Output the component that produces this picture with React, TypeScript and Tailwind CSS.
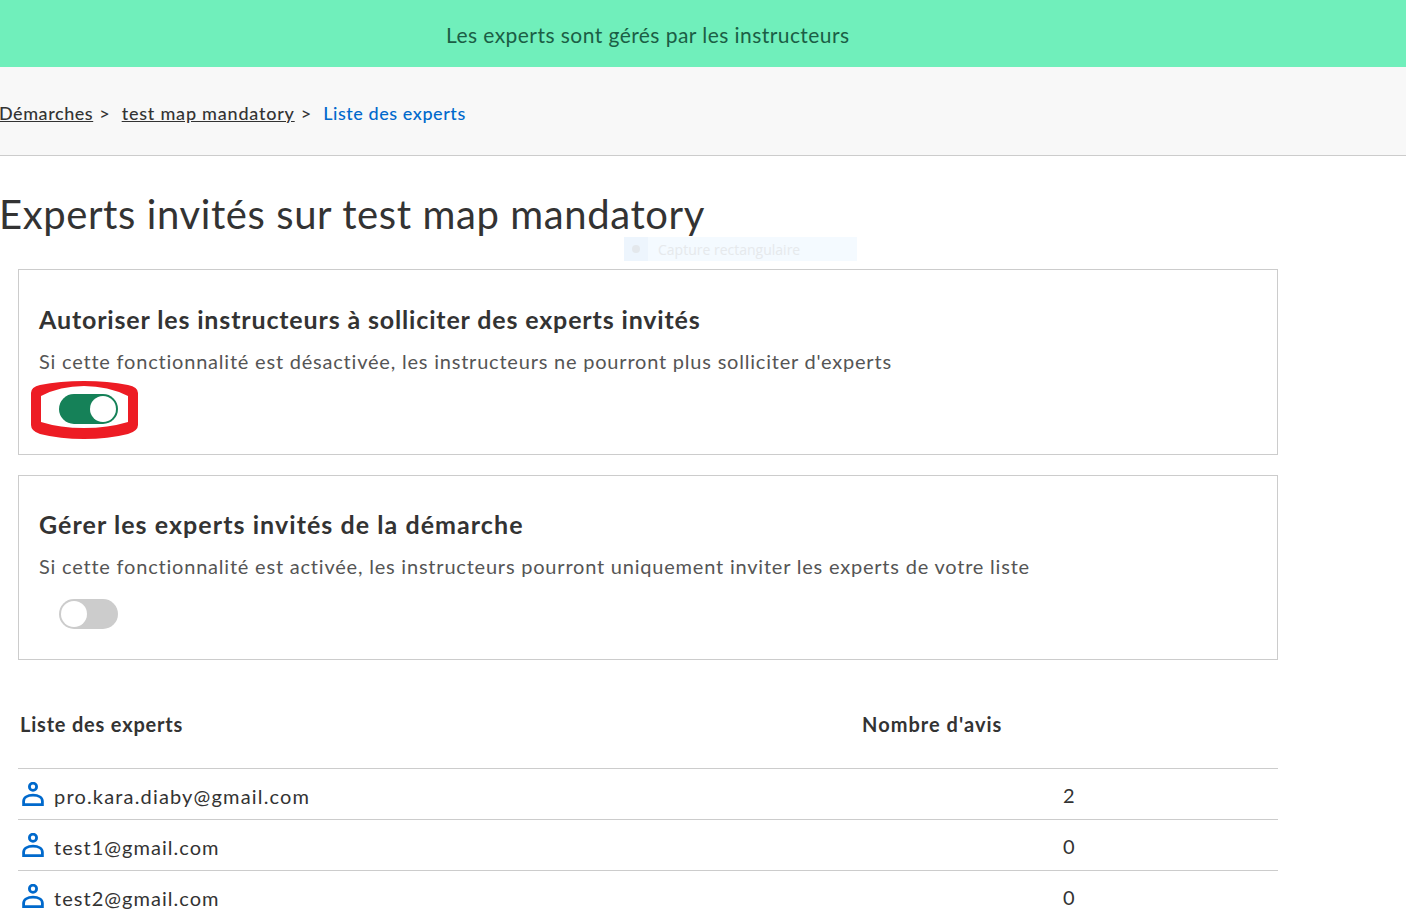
import React from "react";

const experts = [
  { email: "pro.kara.diaby@gmail.com", count: 2, spacing: "tracking-[1.17px]" },
  { email: "test1@gmail.com", count: 0, spacing: "tracking-[1.03px]" },
  { email: "test2@gmail.com", count: 0, spacing: "tracking-[1.03px]" },
];

const UserIcon = () => (
  <svg width="22" height="24" viewBox="0 0 22 24" fill="none" stroke="#0069cc" strokeWidth="2.8" className="shrink-0">
    <circle cx="11" cy="4.8" r="3.6" />
    <path d="M1.6 22.6v-3.4c0-3.6 3.8-6 9.4-6s9.4 2.4 9.4 6v3.4z" />
  </svg>
);

const Toggle = ({ on }: { on: boolean }) => (
  <div
    className={`flex h-[30px] w-[59px] rounded-full p-[2px] ${
      on ? "justify-end bg-[#158158]" : "justify-start bg-[#cccccc]"
    }`}
  >
    <div className="h-[26px] w-[26px] rounded-full bg-white" />
  </div>
);

const Card = ({
  title,
  hint,
  on,
  className,
  titleClassName,
  children,
}: {
  title: string;
  hint: string;
  on: boolean;
  className: string;
  titleClassName: string;
  children?: React.ReactNode;
}) => (
  <section className={`relative border border-[#cccccc] pl-5 ${className}`}>
    <h2 className={`text-[25px] leading-[54px] font-bold text-[#333333] ${titleClassName}`}>{title}</h2>
    <p className="text-[20px] leading-[30px] tracking-[0.79px] text-[#555555]">{hint}</p>
    <div className="ml-5 mt-[18px]">
      <Toggle on={on} />
    </div>
    {children}
  </section>
);

export default function App() {
  return (
    <div className="relative h-[918px] overflow-hidden bg-white font-['Lato',sans-serif] text-[#333333]">
      {/* bandeau */}
      <div className="flex h-[67px] items-center bg-[#70efbb] pl-[446px] pt-[2px] text-[21px] tracking-[0.44px] text-[#1b5e45]">
        Les experts sont gérés par les instructeurs
      </div>

      {/* breadcrumb */}
      <nav className="flex h-[89px] items-center border-b border-[#cccccc] bg-[#f8f8f8] pt-1 text-[18px] font-medium">
        <a className="-ml-[1px] tracking-[0.55px] underline">Démarches</a>
        <span className="ml-[6px]">&gt;</span>
        <a className="ml-[12px] tracking-[0.78px] underline">test map mandatory</a>
        <span className="ml-[6px]">&gt;</span>
        <a className="ml-[12px] tracking-[0.56px] text-[#0069cc]">Liste des experts</a>
      </nav>

      <h1 className="mt-[33px] -ml-[1px] text-[40px] leading-[50px] font-normal tracking-[0.6px] text-[#333333]">
        Experts invités sur test map mandatory
      </h1>

      <main className="ml-[18px] mt-[30px] w-[1260px]">
        <div className="flex flex-col gap-5">
          <Card
            title="Autoriser les instructeurs à solliciter des experts invités"
            hint="Si cette fonctionnalité est désactivée, les instructeurs ne pourront plus solliciter d'experts"
            on
            className="h-[186px] pt-[22px]"
            titleClassName="tracking-[0.85px]"
          >
            {/* annotation rouge */}
            <svg width="110" height="60" viewBox="0 0 110 60" className="absolute left-[11px] top-[110px]">
              <path
                fillRule="evenodd"
                fill="#ed1c24"
                d="M1 13Q1 7 10 5Q30 1 54 1Q78 1 98 5Q108 7 108 13V45Q108 51 98 54Q78 59 54 59Q30 59 10 54Q1 51 1 45ZM11 16V42Q30 48 54 48Q78 48 98 42V16Q78 6 54 6Q30 6 11 16Z"
              />
            </svg>
          </Card>
          <Card
            title="Gérer les experts invités de la démarche"
            hint="Si cette fonctionnalité est activée, les instructeurs pourront uniquement inviter les experts de votre liste"
            on={false}
            className="h-[185px] pt-[21px]"
            titleClassName="tracking-[1.06px]"
          />
        </div>

        <table className="mt-[25px] w-full border-collapse text-[20px]">
          <thead>
            <tr className="h-[83px] border-b border-[#cccccc] text-left">
              <th className="w-[844px] pb-[4px] pl-[2px] font-bold tracking-[0.8px]">Liste des experts</th>
              <th className="pb-[4px] font-bold tracking-[1.03px]">Nombre d'avis</th>
            </tr>
          </thead>
          <tbody>
            {experts.map((expert) => (
              <tr key={expert.email} className="h-[51px] border-b border-[#cccccc] last:border-b-0">
                <td className="pl-1">
                  <div className="flex items-center gap-[10px]">
                    <UserIcon />
                    <span className={`mt-1 ${expert.spacing}`}>{expert.email}</span>
                  </div>
                </td>
                <td className="pl-[201px] pt-[2px]">{expert.count}</td>
              </tr>
            ))}
          </tbody>
        </table>
      </main>

      {/* reste de l'outil de capture */}
      <div className="absolute left-[624px] top-[237px] flex h-6 w-[233px] items-center bg-[#f4faff] text-[#e6e9ec]">
        <span className="flex h-6 w-[24px] items-center justify-center bg-[#edf5fd]">
          <span className="h-2 w-2 rounded-full bg-[#e4e8ec]" />
        </span>
        <span className="ml-[10px] font-['Open_Sans',sans-serif] text-[14px]">Capture rectangulaire</span>
      </div>
    </div>
  );
}
